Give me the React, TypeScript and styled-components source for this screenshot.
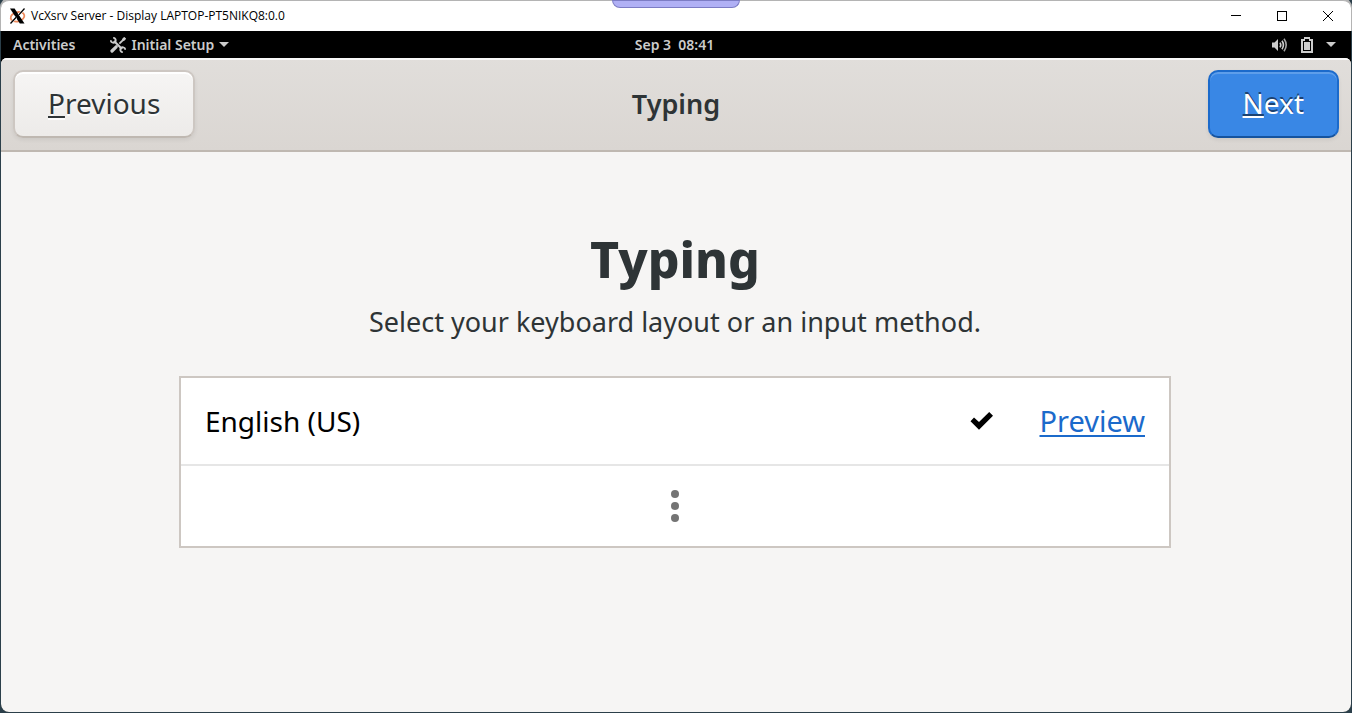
import React from "react";
import styled, { createGlobalStyle, css } from "styled-components";

const GlobalStyle = createGlobalStyle`
  *, *::before, *::after { box-sizing: border-box; }
  body {
    margin: 0;
    background: #2b3f4a;
    font-family: "Noto Sans", "Open Sans", sans-serif;
    color: #2e3436;
  }
  button { font: inherit; color: inherit; }
`;

const Frame = styled.div`
  display: flex;
  flex-direction: column;
  min-height: 100vh;
  padding: 0 1px 1px;
`;

const TitleBar = styled.header`
  position: relative;
  display: flex;
  align-items: center;
  height: 31px;
  padding: 0 0 1px 8px;
  background: #fff;
  border-top: 1px solid #b4b4b4;
  border-radius: 8px 8px 0 0;
  box-shadow: 0 -1px 0 1px #b4b4b4;
`;

const WindowTitle = styled.h1`
  flex: 1;
  margin: 0 0 0 5px;
  font-family: "Open Sans", "Noto Sans", sans-serif;
  font-size: 12px;
  font-weight: 400;
  color: #000;
`;

const DockHandle = styled.div`
  position: absolute;
  top: -1px;
  left: 50%;
  width: 128px;
  height: 8px;
  margin-left: -64px;
  background: #b0b0f5;
  border: 1px solid #7c7cc4;
  border-radius: 0 0 8px 8px;
`;

const WindowButton = styled.button`
  display: grid;
  place-items: center;
  width: 46px;
  height: 29px;
  padding: 0;
  border: 0;
  background: none;
`;

const TopBar = styled.nav`
  display: grid;
  grid-template-columns: 1fr auto 1fr;
  align-items: center;
  height: 27px;
  padding: 0 15px 0 12px;
  background: #000;
  color: #ccc;
  font-size: 14px;
  font-weight: 600;
  line-height: 20px;
`;

const TopGroup = styled.div<{ $end?: boolean }>`
  display: flex;
  align-items: center;
  gap: ${(p) => (p.$end ? "0" : "35px")};
  justify-content: ${(p) => (p.$end ? "flex-end" : "flex-start")};
`;

const TopButton = styled.button`
  display: flex;
  align-items: center;
  gap: 5px;
  padding: 0;
  border: 0;
  background: none;
  white-space: pre;
`;

const StatusButton = styled(TopButton)`
  gap: 13px;
`;

const Shell = styled.div`
  flex: 1;
  display: flex;
  flex-direction: column;
  background: #000;
  border-radius: 0 0 8px 8px;
`;

const Assistant = styled.main`
  flex: 1;
  display: flex;
  flex-direction: column;
  overflow: hidden;
  background: #f6f5f4;
  border-radius: 6px 6px 8px 8px;
`;

const HeaderBar = styled.div`
  display: grid;
  grid-template-columns: 1fr auto 1fr;
  align-items: center;
  height: 94px;
  padding: 0 12px;
  background: linear-gradient(to bottom, #e1dedb, #dad6d2);
  border-bottom: 2px solid #bfb8b1;
  box-shadow: inset 0 2px #f9f8f8;
`;

const HeaderTitle = styled.h2`
  margin: 0;
  font-size: 27px;
  font-weight: 600;
  line-height: 40px;
`;

const NavButton = styled.button<{ $suggested?: boolean }>`
  height: 68px;
  padding: 0 33px 2px;
  border: 2px solid;
  border-radius: 10px;
  font-size: 28px;
  line-height: 40px;

  u {
    text-decoration-thickness: 2px;
    text-underline-offset: 2px;
  }

  ${(p) =>
    p.$suggested
      ? css`
          justify-self: end;
          color: #fff;
          background: #3987e5;
          border-color: #1b6acb #1b6acb #15539e;
          box-shadow: inset 0 2px #5e9eea, 0 2px 4px rgba(0, 0, 0, 0.07);
          text-shadow: 0 -2px rgba(0, 0, 0, 0.5);
        `
      : css`
          justify-self: start;
          background: linear-gradient(to bottom, #f6f5f4, #edebe9);
          border-color: #cdc7c2 #cdc7c2 #bfb8b1;
          box-shadow: inset 0 2px #fff, 0 2px 4px rgba(0, 0, 0, 0.07);
          text-shadow: 0 2px rgba(255, 255, 255, 0.8);
        `}
`;

const Page = styled.section`
  display: flex;
  flex-direction: column;
  align-items: center;
  padding: 71px 24px 24px 22px;
`;

const PageTitle = styled.h3`
  margin: 0;
  font-size: 50px;
  font-weight: 800;
  line-height: 72px;
`;

const PageText = styled.p`
  margin: 7px 0 34px;
  font-size: 27px;
  line-height: 40px;
`;

const LayoutList = styled.ul`
  width: 100%;
  max-width: 992px;
  margin: 0;
  padding: 0;
  list-style: none;
  background: #fff;
  border: 2px solid #cdc7c2;
`;

const LayoutRow = styled.li`
  display: flex;
  align-items: center;
  height: 88px;
  padding: 0 24px;
  border-bottom: 2px solid #e6e6e6;
  color: #000;
  font-size: 28px;
  line-height: 40px;
`;

const LayoutName = styled.span`
  flex: 1;
`;

const PreviewLink = styled.a`
  margin-left: 45px;
  font-size: 29px;
  color: #1b6acb;
  text-decoration: underline;
  text-decoration-thickness: 2px;
  text-underline-offset: 3px;
  text-decoration-skip-ink: none;
`;

const MoreButton = styled.button`
  display: grid;
  place-items: center;
  width: 100%;
  height: 80px;
  padding: 0;
  border: 0;
  background: none;
`;

const XLogo = () => (
  <svg width="17" height="16" viewBox="0 0 17 16" aria-hidden="true">
    <ellipse cx="8.5" cy="8.8" rx="7" ry="4.6" fill="none" stroke="#ee8a5c" strokeWidth="1.8" transform="rotate(-14 8.5 8.8)" />
    <path d="M1 0.5H5.6L15.5 15.5H10.8Z" fill="#000" />
    <path d="M15.5 0.5L9.6 7.2M7.2 9.2L1.5 15.5" stroke="#fff" strokeWidth="2.2" />
    <path d="M15.5 0.5L9.2 7.6M7.4 9L1.5 15.5" stroke="#000" strokeWidth="1.3" />
  </svg>
);

const ToolsIcon = () => (
  <svg width="16" height="16" viewBox="0 0 16 16" fill="none" stroke="#ccc" aria-hidden="true">
    <path d="M4 4L12 12" strokeWidth="2.2" />
    <path d="M3.2 0.8C5.6 0.8 6.4 3.6 5 5C3.6 6.4 0.8 5.6 0.8 3.2M12.8 15.2C10.4 15.2 9.6 12.4 11 11C12.4 9.6 15.2 10.4 15.2 12.8" strokeWidth="1.8" />
    <path d="M14.2 1.8L9.4 6.6" strokeWidth="1.8" />
    <path d="M15.2 0.8L12.8 3.2" strokeWidth="2.8" />
    <path d="M6.2 9.8L2 14" strokeWidth="3.2" strokeLinecap="round" />
  </svg>
);

const CaretIcon = () => (
  <svg width="10" height="5" viewBox="0 0 10 5" fill="#ccc" aria-hidden="true">
    <path d="M0 0H10L5 5Z" />
  </svg>
);

const VolumeIcon = () => (
  <svg width="16" height="14" viewBox="0 0 16 14" fill="none" stroke="#ccc" aria-hidden="true">
    <path d="M0 4.5H2.5L6 1V13L2.5 9.5H0Z" fill="#ccc" stroke="none" />
    <path d="M8 4.6Q9.6 7 8 9.4" strokeWidth="1.6" />
    <path d="M10 2.8Q12.8 7 10 11.2" strokeWidth="1.6" />
    <path d="M12 0.8Q16.4 7 12 13.2" strokeWidth="1.6" opacity="0.8" />
  </svg>
);

const BatteryIcon = () => (
  <svg width="12" height="16" viewBox="0 0 12 16" aria-hidden="true">
    <path d="M3 0H9V2H12V16H0V2H3ZM2 4V14H10V4H8V2H4V4Z" fill="#ccc" fillRule="evenodd" />
    <path d="M3 5H9V13H3Z" fill="#ccc" />
  </svg>
);

const CheckIcon = () => (
  <svg width="24" height="18" viewBox="0 0 24 18" role="img" aria-label="Selected">
    <path d="M0.5 9.2L4 5.4L9 10L19.2 0L23 3.7L9 17.8Z" fill="#000" />
  </svg>
);

const DotsIcon = () => (
  <svg width="8" height="32" viewBox="0 0 8 32" fill="#747474" aria-hidden="true">
    <circle cx="4" cy="4" r="4" />
    <circle cx="4" cy="16" r="4" />
    <circle cx="4" cy="28" r="4" />
  </svg>
);

export default function App() {
  return (
    <>
      <GlobalStyle />
      <Frame>
        <TitleBar>
          <XLogo />
          <WindowTitle>VcXsrv Server - Display LAPTOP-PT5NIKQ8:0.0</WindowTitle>
          <WindowButton aria-label="Minimize">
            <svg width="10" height="10" viewBox="0 0 10 10" stroke="#000">
              <path d="M0 4.5H10" />
            </svg>
          </WindowButton>
          <WindowButton aria-label="Maximize">
            <svg width="10" height="10" viewBox="0 0 10 10" fill="none" stroke="#000">
              <rect x="0.5" y="0.5" width="9" height="9" />
            </svg>
          </WindowButton>
          <WindowButton aria-label="Close">
            <svg width="10" height="10" viewBox="0 0 10 10" stroke="#000">
              <path d="M0 0L10 10M10 0L0 10" />
            </svg>
          </WindowButton>
          <DockHandle />
        </TitleBar>
        <Shell>
          <TopBar>
            <TopGroup>
              <TopButton>Activities</TopButton>
              <TopButton>
                <ToolsIcon />
                Initial Setup
                <CaretIcon />
              </TopButton>
            </TopGroup>
            <TopButton>{"Sep 3  08:41"}</TopButton>
            <TopGroup $end>
              <StatusButton aria-label="System status">
                <VolumeIcon />
                <BatteryIcon />
                <CaretIcon />
              </StatusButton>
            </TopGroup>
          </TopBar>
          <Assistant>
            <HeaderBar>
              <NavButton>
                <u>P</u>revious
              </NavButton>
              <HeaderTitle>Typing</HeaderTitle>
              <NavButton $suggested>
                <u>N</u>ext
              </NavButton>
            </HeaderBar>
            <Page>
              <PageTitle>Typing</PageTitle>
              <PageText>Select your keyboard layout or an input method.</PageText>
              <LayoutList>
                <LayoutRow>
                  <LayoutName>English (US)</LayoutName>
                  <CheckIcon />
                  <PreviewLink href="#preview">Preview</PreviewLink>
                </LayoutRow>
                <li>
                  <MoreButton aria-label="More layouts">
                    <DotsIcon />
                  </MoreButton>
                </li>
              </LayoutList>
            </Page>
          </Assistant>
        </Shell>
      </Frame>
    </>
  );
}
